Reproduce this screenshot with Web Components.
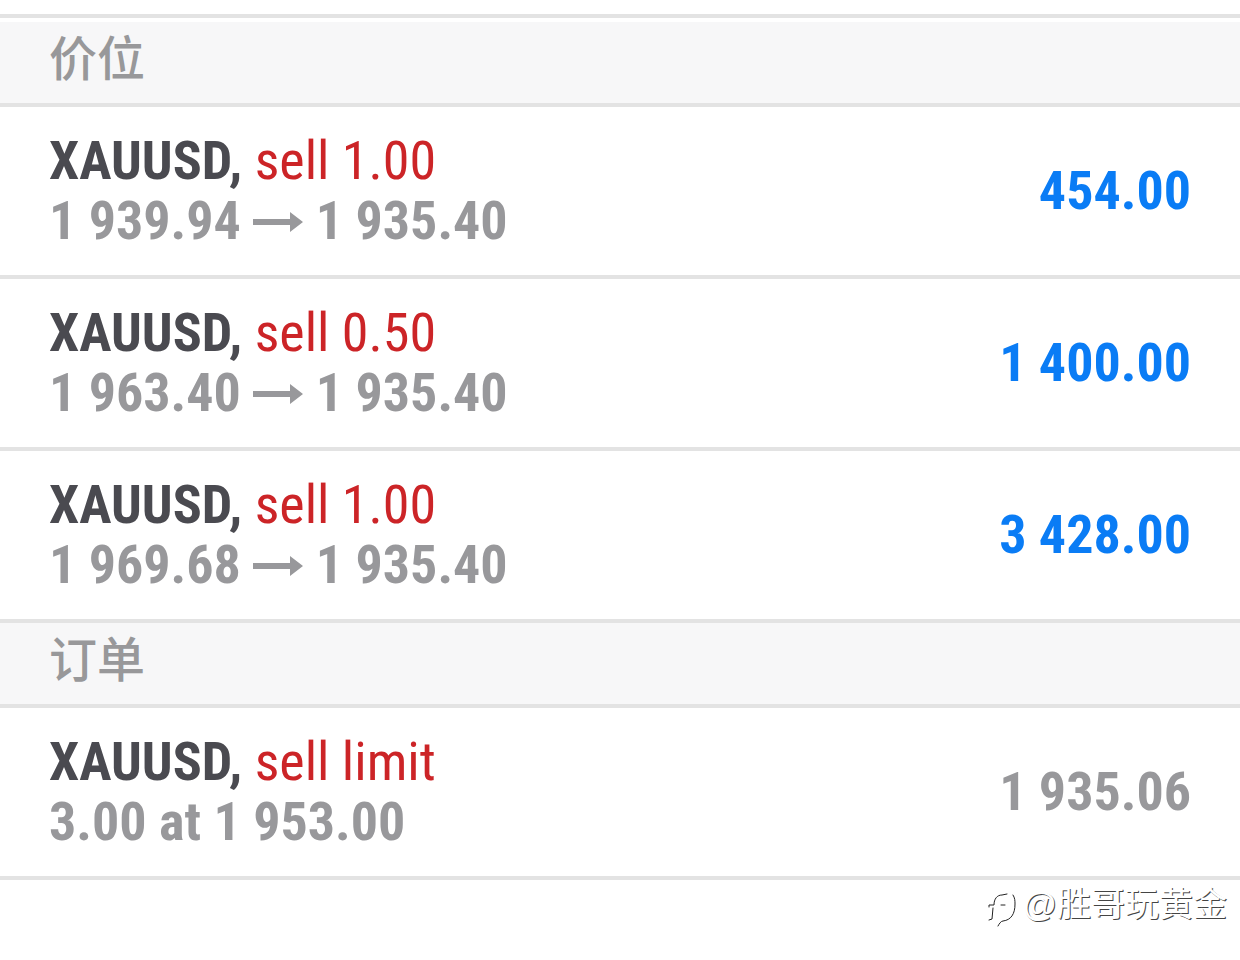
<!DOCTYPE html>
<html lang="zh-CN">
<head>
<meta charset="utf-8">
<meta name="viewport" content="width=device-width, initial-scale=1">
<title>价位</title>
<style>
  body {
    margin: 0;
    background: #fff;
    color: #4a4a50;
    font-family: "Roboto Condensed", "Liberation Sans Narrow", Roboto, "Noto Sans CJK SC", sans-serif;
    font-size: 54px;
    line-height: 60px;
  }
</style>
</head>
<body>
<trade-list>
  <trade-section label="价位">
    <trade-row symbol="XAUUSD" action="sell 1.00" amount="454.00" profit>1 939.94 <trade-arrow></trade-arrow> 1 935.40</trade-row>
    <trade-row symbol="XAUUSD" action="sell 0.50" amount="1 400.00" profit>1 963.40 <trade-arrow></trade-arrow> 1 935.40</trade-row>
    <trade-row symbol="XAUUSD" action="sell 1.00" amount="3 428.00" profit>1 969.68 <trade-arrow></trade-arrow> 1 935.40</trade-row>
  </trade-section>
  <trade-section label="订单">
    <trade-row symbol="XAUUSD" action="sell limit" amount="1 935.06">3.00 at 1 953.00</trade-row>
  </trade-section>
</trade-list>
<author-mark>@胜哥玩黄金</author-mark>

<script>
class TradeList extends HTMLElement {
  constructor() {
    super();
    this.attachShadow({ mode: "open" });

    this.shadowRoot.innerHTML = `
            <style>
                :host {
                    display: block;
                    margin-top: 14px;
                    border-top: 4px solid #e3e3e3;
                    padding-top: 4px;
                }
            </style>
            <slot></slot>
        `;
  }
}

class TradeSection extends HTMLElement {
  constructor() {
    super();
    this.attachShadow({ mode: "open" });

    this.shadowRoot.innerHTML = `
            <style>
                :host {
                    display: block;
                }
                h2 {
                    margin: 0;
                    padding: 3px 49px 18px;
                    border-bottom: 4px solid #e3e3e3;
                    background: #f7f7f8;
                    color: #98989a;
                    font-family: "Noto Sans CJK SC", sans-serif;
                    font-size: 48px;
                    font-weight: 500;
                    line-height: 60px;
                }
            </style>
            <section>
                <h2></h2>
                <slot></slot>
            </section>
        `;
    this.shadowRoot.querySelector("h2").textContent = this.getAttribute("label");
  }
}

class TradeRow extends HTMLElement {
  constructor() {
    super();
    this.attachShadow({ mode: "open" });

    this.shadowRoot.innerHTML = `
            <style>
                :host {
                    display: flex;
                    justify-content: space-between;
                    align-items: center;
                    padding: 24px 49px;
                    border-bottom: 4px solid #e3e3e3;
                    white-space: nowrap;
                }
                .symbol, .prices, .amount {
                    font-weight: 700;
                }
                .action {
                    color: #cc2427;
                }
                .prices, .amount {
                    color: #98989b;
                }
                :host([profit]) .amount {
                    color: #0a7cf5;
                }
            </style>
            <div>
                <div><span class="symbol"></span> <span class="action"></span></div>
                <div class="prices"><slot></slot></div>
            </div>
            <div class="amount"></div>
        `;
    this.shadowRoot.querySelector(".symbol").textContent = this.getAttribute("symbol") + ",";
    this.shadowRoot.querySelector(".action").textContent = this.getAttribute("action");
    this.shadowRoot.querySelector(".amount").textContent = this.getAttribute("amount");
  }
}

class TradeArrow extends HTMLElement {
  constructor() {
    super();
    this.attachShadow({ mode: "open" });

    this.shadowRoot.innerHTML = `
            <style>
                :host {
                    display: inline-block;
                }
                svg {
                    display: inline-block;
                    width: 50px;
                    height: 27px;
                    fill: currentColor;
                }
            </style>
            <svg viewBox="0 0 50 27" aria-hidden="true"><path d="M0 7h37V0l13 10-13 10v-7H0z"/></svg>
        `;
  }
}

class AuthorMark extends HTMLElement {
  constructor() {
    super();
    this.attachShadow({ mode: "open" });

    this.shadowRoot.innerHTML = `
            <style>
                :host {
                    display: flex;
                    justify-content: flex-end;
                    align-items: center;
                    gap: 4px;
                    padding: 0 13px;
                    color: #fff;
                    font-family: "Liberation Sans", "Noto Sans CJK SC", sans-serif;
                    font-size: 34px;
                    line-height: 44px;
                    text-shadow: 1px 1px 0 #444;
                }
                svg {
                    width: 36px;
                    height: 48px;
                    fill: none;
                    stroke: #222;
                    stroke-linecap: round;
                }
            </style>
            <svg viewBox="0 0 36 48" aria-hidden="true">
                <path d="M7 27v-2h5c0-6 3-10 8-10l5-1" stroke-width="1"/>
                <path d="M11 28l-1 11-3 1M19 25h4" stroke-width="1"/>
                <path d="M31 15c2 3 2 6 2 9 0 10-4 16-12 17-2 0-4 3-5 5" stroke-width="1"/>
            </svg>
            <span><slot></slot></span>
        `;
  }
}

customElements.define("trade-list", TradeList);
customElements.define("trade-section", TradeSection);
customElements.define("trade-row", TradeRow);
customElements.define("trade-arrow", TradeArrow);
customElements.define("author-mark", AuthorMark);
</script>
</body>
</html>
